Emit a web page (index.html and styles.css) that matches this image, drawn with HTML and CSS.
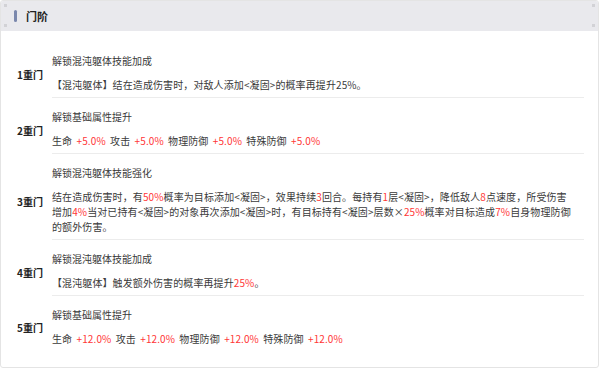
FILE: index.html
```html
<!DOCTYPE html>
<html lang="zh">
<head>
<meta charset="utf-8">
<link rel="stylesheet" href="styles.css">
</head>
<body>
<div class="card">
  <div class="header">
    <span class="dot dot-tl"></span><span class="dot dot-bl"></span>
    <span class="dot dot-tr"></span><span class="dot dot-br"></span>
    <span class="accent"></span>
    <span class="title">门阶</span>
  </div>
  <div class="list">
    <div class="row">
      <div class="label">1重门</div>
      <div class="content">
        <div class="name">解锁混沌躯体技能加成</div>
        <div class="desc">【混沌躯体】结在造成伤害时，对敌人添加&lt;凝固&gt;的概率再提升25%。</div>
      </div>
    </div>
    <div class="row">
      <div class="label">2重门</div>
      <div class="content">
        <div class="name">解锁基础属性提升</div>
        <div class="desc">生命 <span class="stat">+5.0%</span> 攻击 <span class="stat">+5.0%</span> 物理防御 <span class="stat">+5.0%</span> 特殊防御 <span class="stat">+5.0%</span></div>
      </div>
    </div>
    <div class="row">
      <div class="label">3重门</div>
      <div class="content">
        <div class="name">解锁混沌躯体技能强化</div>
        <div class="desc">结在造成伤害时，有<span class="red">50%</span>概率为目标添加&lt;凝固&gt;，效果持续<span class="red">3</span>回合。每持有<span class="red">1</span>层&lt;凝固&gt;，降低敌人<span class="red">8</span>点速度，所受伤害<br>增加<span class="red">4%</span>当对已持有&lt;凝固&gt;的对象再次添加&lt;凝固&gt;时，有目标持有&lt;凝固&gt;层数×<span class="red">25%</span>概率对目标造成<span class="red">7%</span>自身物理防御<br>的额外伤害。</div>
      </div>
    </div>
    <div class="row">
      <div class="label">4重门</div>
      <div class="content">
        <div class="name">解锁混沌躯体技能加成</div>
        <div class="desc">【混沌躯体】触发额外伤害的概率再提升<span class="red">25%</span>。</div>
      </div>
    </div>
    <div class="row">
      <div class="label">5重门</div>
      <div class="content">
        <div class="name">解锁基础属性提升</div>
        <div class="desc">生命 <span class="stat">+12.0%</span> 攻击 <span class="stat">+12.0%</span> 物理防御 <span class="stat">+12.0%</span> 特殊防御 <span class="stat">+12.0%</span></div>
      </div>
    </div>
  </div>
</div>
</body>
</html>
```

FILE: styles.css
```css
html, body {
  margin: 0;
  padding: 0;
  background: #ffffff;
}
body {
  font-family: "Noto Sans CJK SC", "Noto Sans", sans-serif;
  font-size: 10px;
  color: #333;
}
.card {
  width: 597px;
  height: 366px;
  border: 1px solid #e4e4e4;
  border-radius: 3px;
  overflow: hidden;
  box-sizing: content-box;
}
.header {
  position: relative;
  height: 30px;
  background: #e9e9ed;
  display: flex;
  align-items: center;
  padding-left: 13px;
  gap: 9px;
}
.accent {
  width: 3px;
  height: 12px;
  border-radius: 2px;
  background: #7b88ad;
}
.title {
  font-size: 11px;
  font-weight: bold;
  color: #222;
  line-height: 15px;
}
.dot {
  position: absolute;
  width: 3px;
  height: 3px;
  background: #d2d2d6;
}
.dot-tl { left: 3px; top: 3px; }
.dot-bl { left: 3px; top: 23px; }
.dot-tr { left: 591px; top: 3px; }
.dot-br { left: 591px; top: 23px; }
.list {
  padding: 19px 14px 12px 0;
}
.row {
  display: flex;
  align-items: center;
  margin-top: 8px;
}
.row:first-child {
  margin-top: 0;
}
.label {
  width: 51px;
  padding-left: 16px;
  box-sizing: border-box;
  flex: none;
  font-weight: bold;
  color: #222;
  line-height: 15px;
  white-space: nowrap;
}
.content {
  flex: 1;
  padding: 3px 0 5px;
  border-bottom: 1px solid #ececec;
}
.row:last-child .content {
  border-bottom: none;
}
.name {
  line-height: 15px;
  color: #3a3a3a;
  margin-bottom: 9px;
}
.desc {
  line-height: 15px;
  color: #3a3a3a;
  white-space: nowrap;
  letter-spacing: 0.1px;
}
.red {
  color: #ff3636;
}
.stat {
  color: #ff3636;
  margin: 0 2px;
}
```
